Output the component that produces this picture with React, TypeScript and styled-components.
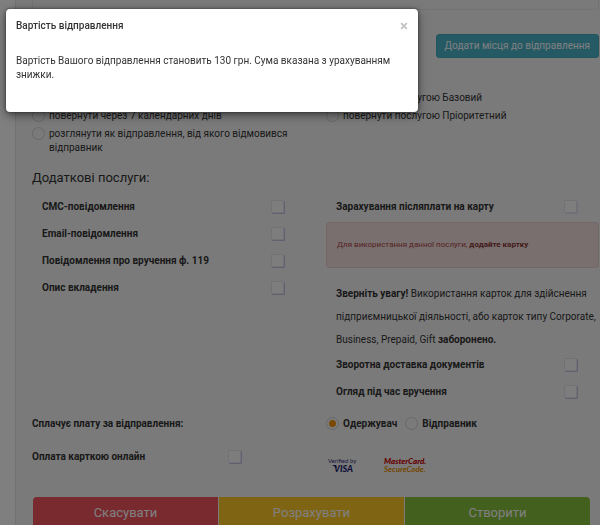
import React from "react";
import styled, { createGlobalStyle } from "styled-components";

const GlobalStyle = createGlobalStyle`
  *, *::before, *::after { box-sizing: border-box; }
  body {
    margin: 0;
    overflow: hidden;
    background: #ffffff;
    color: #333333;
    font: 10px/14px Roboto, "Liberation Sans", sans-serif;
  }
  button, input { font: inherit; margin: 0; }
`;

const Page = styled.main`
  margin-left: 15px;
  padding: 0 1px 0 16px;
  min-height: 100vh;
  border-left: 1px solid #e3e3e3;
  background: #f5f5f5;
`;

const PlacesBox = styled.section`
  height: 10px;
  border: 1px solid #e7e7e7;
  border-top: 0;
  border-radius: 0 0 4px 4px;
`;

const Toolbar = styled.div`
  display: flex;
  justify-content: flex-end;
  padding: 24px 0 33px;
`;

const AddButton = styled.button`
  height: 24px;
  padding: 0 8px;
  border: 1px solid #46aabd;
  border-radius: 3px;
  background: #4bb4cb;
  color: #ffffff;
`;

const Columns = styled.div`
  display: grid;
  grid-template-columns: 294fr 273fr;
`;

const RadioGroup = styled.div`
  display: flex;
  flex-direction: column;
  gap: 4px;
  padding-right: 30px;
`;

const RadioLabel = styled.label<{ $strong?: boolean }>`
  display: flex;
  align-items: flex-start;
  gap: 4px;
  font-weight: ${(p) => (p.$strong ? 700 : 400)};
`;

const Radio = styled.input.attrs({ type: "radio" })`
  appearance: none;
  flex: none;
  width: 13px;
  height: 13px;
  border: 1px solid #d0d0d0;
  border-radius: 50%;

  &:checked {
    background: radial-gradient(circle, #f39200 3px, transparent 4px);
  }
`;

const Heading = styled.h2`
  margin: 15px 0 7px;
  font-size: 13px;
  line-height: 16px;
  font-weight: 400;
`;

const OptionList = styled.div`
  display: flex;
  flex-direction: column;
`;

const Option = styled.div<{ $left?: number; $right?: number }>`
  display: flex;
  align-items: center;
  justify-content: space-between;
  height: 27px;
  padding: 0 ${(p) => p.$right ?? 22}px 0 ${(p) => p.$left ?? 10}px;
  font-weight: 700;
`;

const Check = styled.input.attrs({ type: "checkbox" })`
  appearance: none;
  flex: none;
  width: 13px;
  height: 13px;
  border: 1px solid #e4e4ec;
  border-radius: 1px;
  background: #fafafa;
  box-shadow: 1px 1px 0 #c6c2e2;

  &:disabled {
    background: #fcfcff;
    box-shadow: 1px 1px 0 #e0e0f4;
  }
`;

const Alert = styled.div`
  margin-top: 2px;
  padding: 15px 10px;
  border: 1px solid #ebccd1;
  border-radius: 3px;
  background: #f2dede;
  color: #a94442;
  font-size: 8px;
`;

const AlertLink = styled.a`
  color: #843534;
  font-weight: 700;
  text-decoration: none;
`;

const Notice = styled.p`
  margin: 14px 0 0;
  padding-left: 10px;
  line-height: 23px;
`;

const PaymentRow = styled(Columns)`
  margin-top: 12px;
  min-height: 26px;
  font-weight: 700;
`;

const PayerChoices = styled.div`
  display: flex;
  align-items: flex-start;
  gap: 8px;
`;

const Logos = styled.div`
  display: flex;
  gap: 26px;
  padding: 14px 0 0 2px;
`;

const ActionBar = styled.div`
  display: grid;
  grid-template-columns: repeat(3, 1fr);
  gap: 1px;
  margin: 24px 9px 0 1px;
  border-radius: 4px;
  overflow: hidden;
`;

const ActionButton = styled.button<{ $color: string }>`
  height: 32px;
  padding: 0;
  border: 0;
  background: ${(p) => p.$color};
  color: #ffffff;
  font-size: 13px;
`;

const Backdrop = styled.div`
  position: fixed;
  inset: 0;
  background: rgba(0, 0, 0, 0.5);
`;

const Modal = styled.section`
  position: fixed;
  top: 9px;
  left: 6px;
  width: 412px;
  max-width: calc(100vw - 12px);
  padding: 10px 10px 30px;
  border-radius: 4px;
  background: #ffffff;
  box-shadow: 0 3px 10px rgba(0, 0, 0, 0.5), 0 0 3px rgba(0, 0, 0, 0.5);
`;

const ModalHeader = styled.header`
  display: flex;
  align-items: center;
  justify-content: space-between;
`;

const ModalTitle = styled.h1`
  margin: 0;
  font-size: 10px;
  line-height: 14px;
  font-weight: 500;
`;

const CloseButton = styled.button`
  padding: 0;
  border: 0;
  background: none;
  color: #c4c4c4;
  font-size: 15px;
  line-height: 14px;
  font-weight: 700;
`;

const ModalText = styled.p`
  margin: 21px 0 0;
`;

const RadioItem = ({ name, text, strong, checked }: { name: string; text: string; strong?: boolean; checked?: boolean }) => (
  <RadioLabel $strong={strong}>
    <Radio name={name} defaultChecked={checked} />
    {text}
  </RadioLabel>
);

const CheckOption = ({ id, text, left, right, disabled }: { id: string; text: string; left?: number; right?: number; disabled?: boolean }) => (
  <Option $left={left} $right={right}>
    <label htmlFor={id}>{text}</label>
    <Check id={id} disabled={disabled} />
  </Option>
);

const VisaLogo = () => (
  <svg width="30" height="16" viewBox="0 0 30 16" role="img" aria-label="Verified by Visa">
    <text x="0" y="6" fontFamily="Lato, sans-serif" fontSize="6" fontWeight="400" fill="#2e2e78">Verified by</text>
    <text x="6" y="15" fontFamily="Lato, sans-serif" fontSize="9" fontWeight="900" fontStyle="italic" fill="#1c1c72">VISA</text>
    <path d="M4 8h4l1 3z" fill="#1c1c72" />
  </svg>
);

const MasterCardLogo = () => (
  <svg width="44" height="16" viewBox="0 0 44 16" role="img" aria-label="MasterCard SecureCode">
    <text x="0" y="7" fontFamily="Lato, sans-serif" fontSize="8" fontWeight="900" fontStyle="italic" fill="#cc0000">MasterCard.</text>
    <text x="0" y="15" fontFamily="Lato, sans-serif" fontSize="8" fontWeight="700" fontStyle="italic" fill="#e89000">SecureCode.</text>
  </svg>
);

export default function App() {
  return (
    <>
      <GlobalStyle />
      <Page>
        <PlacesBox />
        <Toolbar>
          <AddButton type="button">Додати місця до відправлення</AddButton>
        </Toolbar>

        <Columns>
          <RadioGroup>
            <RadioItem name="return-term" text="повернути негайно" />
            <RadioItem name="return-term" text="повернути через 7 календарних днів" />
            <RadioItem name="return-term" text="розглянути як відправлення, від якого відмовився відправник" />
          </RadioGroup>
          <RadioGroup>
            <RadioItem name="return-service" text="повернути послугою Базовий" />
            <RadioItem name="return-service" text="повернути послугою Пріоритетний" />
          </RadioGroup>
        </Columns>

        <Heading>Додаткові послуги:</Heading>

        <Columns>
          <OptionList>
            <CheckOption id="sms" text="СМС-повідомлення" right={42} />
            <CheckOption id="email" text="Email-повідомлення" right={42} />
            <CheckOption id="delivery-notice" text="Повідомлення про вручення ф. 119" right={42} />
            <CheckOption id="inventory" text="Опис вкладення" right={42} />
          </OptionList>
          <OptionList>
            <CheckOption id="card-transfer" text="Зарахування післяплати на карту" disabled />
            <Alert>
              Для використання данної послуги, <AlertLink href="#">додайте картку</AlertLink>
            </Alert>
            <Notice>
              <b>Зверніть увагу!</b> Використання карток для здійснення підприємницької діяльності, або карток типу
              Corporate, Business, Prepaid, Gift <b>заборонено.</b>
            </Notice>
            <CheckOption id="return-docs" text="Зворотна доставка документів" />
            <CheckOption id="inspection" text="Огляд під час вручення" />
          </OptionList>
        </Columns>

        <PaymentRow>
          <span>Сплачує плату за відправлення:</span>
          <PayerChoices>
            <RadioItem name="payer" text="Одержувач" strong checked />
            <RadioItem name="payer" text="Відправник" strong />
          </PayerChoices>
        </PaymentRow>

        <Columns>
          <CheckOption id="online-pay" text="Оплата карткою онлайн" left={0} right={85} />
          <Logos>
            <VisaLogo />
            <MasterCardLogo />
          </Logos>
        </Columns>

        <ActionBar>
          <ActionButton type="button" $color="#f0545f">Скасувати</ActionButton>
          <ActionButton type="button" $color="#ffc928">Розрахувати</ActionButton>
          <ActionButton type="button" $color="#89c03f">Створити</ActionButton>
        </ActionBar>
      </Page>
      <Backdrop />
      <Modal role="dialog" aria-modal="true" aria-labelledby="modal-title">
        <ModalHeader>
          <ModalTitle id="modal-title">Вартість відправлення</ModalTitle>
          <CloseButton type="button" aria-label="Закрити">×</CloseButton>
        </ModalHeader>
        <ModalText>
          Вартість Вашого відправлення становить 130 грн. Сума вказана з урахуванням знижки.
        </ModalText>
      </Modal>
    </>
  );
}
